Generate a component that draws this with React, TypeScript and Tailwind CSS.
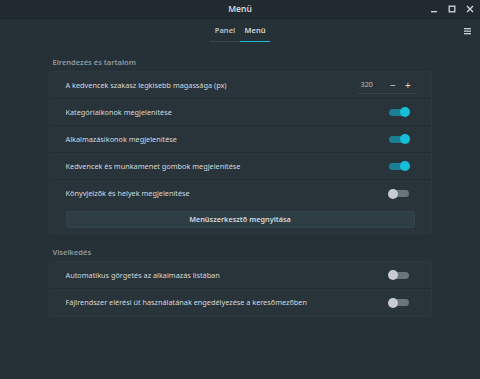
import React from "react";

const font = { fontFamily: '"Noto Sans", "DejaVu Sans", sans-serif' };

function Toggle({ on }: { on: boolean }) {
  return (
    <div className="relative w-[22px] h-[10px] flex items-center">
      <div className={`w-[20px] h-[7px] rounded-full ml-[1px] ${on ? "bg-[#1a7f93]" : "bg-[#6b7479]"}`} />
      <div
        className={`absolute top-0 w-[10px] h-[10px] rounded-full ${on ? "right-0 bg-[#16bfd8]" : "left-0 bg-[#c8ccd0]"}`}
      />
    </div>
  );
}

function Row({ label, children, last }: { label: string; children?: React.ReactNode; last?: boolean }) {
  return (
    <div className={`flex items-center h-[27px] pl-[16px] pr-[21px] ${last ? "" : "border-b border-[#222b30]"}`}>
      <span className="flex-1 text-[7.3px] text-[#d3dade]">{label}</span>
      {children}
    </div>
  );
}

export default function App() {
  return (
    <div className="w-[480px] h-[379px] bg-[#263137] flex flex-col overflow-hidden" style={font}>
      <div className="h-[19px] bg-[#212a2f] border-b border-[#1d2428] flex items-center relative">
        <div className="flex-1 text-center text-[8.5px] font-semibold text-[#d5dade]">Menü</div>
        <div className="absolute right-[6px] top-0 h-full flex items-center gap-[10px] text-[#d5dade]">
          <svg width="8" height="8" viewBox="0 0 8 8"><rect x="1" y="6" width="6" height="1.3" fill="currentColor" /></svg>
          <svg width="8" height="8" viewBox="0 0 8 8"><rect x="1.2" y="1.2" width="5.6" height="5.6" fill="none" stroke="currentColor" strokeWidth="1.3" /></svg>
          <svg width="8" height="8" viewBox="0 0 8 8"><path d="M1 1L7 7M7 1L1 7" stroke="currentColor" strokeWidth="1.3" /></svg>
        </div>
      </div>
      <div className="h-[23px] flex items-end justify-center relative">
        <div className="w-[30px] h-[23px] flex flex-col items-center justify-between border-b-[1.5px] border-[#3a454b] pt-[6px]">
          <span className="text-[7.5px] font-semibold text-[#b9c2c7]">Panel</span>
        </div>
        <div className="w-[30px] h-[23px] flex flex-col items-center justify-between border-b-[1.5px] border-[#16bfd8] pt-[6px]">
          <span className="text-[7.5px] font-semibold text-[#d5dade]">Menü</span>
        </div>
        <div className="absolute right-[8px] top-[8px]">
          <svg width="9" height="8" viewBox="0 0 9 8">
            <rect x="1" y="1" width="7" height="1.3" fill="#c8ced2" />
            <rect x="1" y="3.5" width="7" height="1.3" fill="#c8ced2" />
            <rect x="1" y="6" width="7" height="1.3" fill="#c8ced2" />
          </svg>
        </div>
      </div>
      <div className="w-[383px] mx-auto mt-[15px] flex flex-col">
        <div className="text-[7.5px] font-semibold text-[#8c9aa2] pl-[4px] h-[14px]">Elrendezés és tartalom</div>
        <div className="bg-[#28333a] border border-[#2d383e] rounded-[2px]">
          <Row label="A kedvencek szakasz legkisebb magassága (px)">
            <div className="flex items-center border-b-[1.5px] border-[#36424a] h-[18px] w-[58px] pl-[3px] mr-[-6px]">
              <span className="text-[7.3px] text-[#b9c2c7] w-[26px]">320</span>
              <span className="text-[10px] text-[#d5dade] w-[16px] text-center leading-none">−</span>
              <span className="text-[10px] text-[#d5dade] w-[16px] text-center leading-none">+</span>
            </div>
          </Row>
          <Row label="Kategóriaikonok megjelenítése"><Toggle on /></Row>
          <Row label="Alkalmazásikonok megjelenítése"><Toggle on /></Row>
          <Row label="Kedvencek és munkamenet gombok megjelenítése"><Toggle on /></Row>
          <Row label="Könyvjelzők és helyek megjelenítése" last><Toggle on={false} /></Row>
          <div className="px-[16px] pb-[5px] pt-[4px]">
            <div className="h-[17px] bg-[#2f3d44] border border-[#34424a] rounded-[2px] flex items-center justify-center text-[7.3px] font-semibold text-[#d3dade]">
              Menüszerkesztő megnyitása
            </div>
          </div>
        </div>
        <div className="text-[7.5px] font-semibold text-[#8c9aa2] pl-[4px] mt-[13px] h-[14px]">Viselkedés</div>
        <div className="bg-[#28333a] border border-[#2d383e] rounded-[2px]">
          <Row label="Automatikus görgetés az alkalmazás listában"><Toggle on={false} /></Row>
          <Row label="Fájlrendszer elérési út használatának engedélyezése a keresőmezőben" last><Toggle on={false} /></Row>
        </div>
      </div>
    </div>
  );
}
